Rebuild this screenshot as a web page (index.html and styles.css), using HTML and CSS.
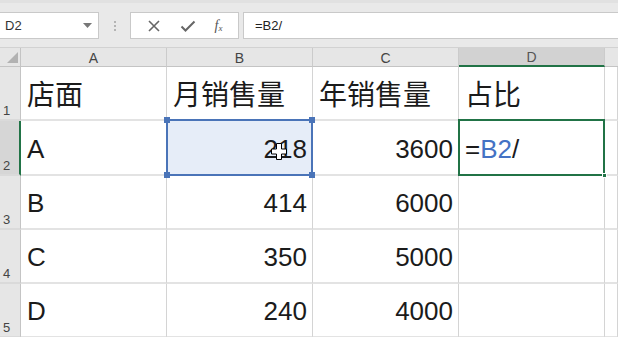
FILE: index.html
```html
<!DOCTYPE html>
<html lang="zh">
<head>
<meta charset="utf-8">
<title>Excel</title>
<link rel="stylesheet" href="styles.css">
</head>
<body>
<div class="formula-bar">
  <div class="namebox">
    <span class="name">D2</span>
    <svg class="dd" width="9" height="5" viewBox="0 0 9 5"><path d="M0 0h9L4.5 5z" fill="#777"/></svg>
  </div>
  <div class="grip"><i></i><i></i><i></i></div>
  <div class="buttons">
    <svg width="14" height="14" viewBox="0 0 14 14"><path d="M2 2L12 12M12 2L2 12" stroke="#666" stroke-width="1.6" fill="none"/></svg>
    <svg width="16" height="14" viewBox="0 0 16 14"><path d="M1.5 7.5L5.5 11.5L14.5 2.5" stroke="#666" stroke-width="2" fill="none"/></svg>
    <span class="fx">f<sub>x</sub></span>
  </div>
  <div class="formula-input">=B2/</div>
</div>
<div class="sheet">
  <div class="corner"><span class="tri"></span></div>
  <div class="colh">A</div>
  <div class="colh">B</div>
  <div class="colh">C</div>
  <div class="colh sel">D</div>
  <div class="colh last"></div>

  <div class="rowh">1</div>
  <div class="cell zh">店面</div>
  <div class="cell zh">月销售量</div>
  <div class="cell zh">年销售量</div>
  <div class="cell zh">占比</div>
  <div class="cell"></div>

  <div class="rowh sel">2</div>
  <div class="cell">A</div>
  <div class="cell num selb">2<span class="gap">1</span>8
    <span class="h tl"></span><span class="h tr"></span><span class="h bl"></span><span class="h br"></span>
    <svg class="cursor" width="16" height="17" viewBox="0 0 16 17"><path d="M5.5 0.5h5v5.5h5v5h-5v5.5h-5v-5.5h-5v-5h5z" fill="#fff" stroke="#000" stroke-width="1"/></svg>
  </div>
  <div class="cell num">3600</div>
  <div class="cell active">=<span class="ref">B2</span>/<span class="fill"></span></div>
  <div class="cell"></div>

  <div class="rowh">3</div>
  <div class="cell">B</div>
  <div class="cell num">414</div>
  <div class="cell num">6000</div>
  <div class="cell"></div>
  <div class="cell"></div>

  <div class="rowh">4</div>
  <div class="cell">C</div>
  <div class="cell num">350</div>
  <div class="cell num">5000</div>
  <div class="cell"></div>
  <div class="cell"></div>

  <div class="rowh">5</div>
  <div class="cell">D</div>
  <div class="cell num">240</div>
  <div class="cell num">4000</div>
  <div class="cell"></div>
  <div class="cell"></div>
</div>
</body>
</html>
```
FILE: styles.css
```css
* { box-sizing: border-box; }
html, body { margin: 0; padding: 0; }
body {
  width: 618px;
  height: 337px;
  overflow: hidden;
  background: #fff;
  font-family: "Liberation Sans", "Noto Sans CJK SC", sans-serif;
}
.formula-bar {
  height: 48px;
  background: #e9e9e9;
  border-top: 3px solid #e1e1e1;
  padding-top: 9px;
  display: flex;
  align-items: flex-start;
  border-bottom: 1px solid #d2d2d2;
}
.namebox {
  width: 99px;
  height: 27px;
  background: #fff;
  border: 1px solid #c9c9c9;
  border-left: none;
  display: flex;
  align-items: center;
  justify-content: space-between;
  padding: 0 6px 0 5px;
}
.name { font-size: 13px; color: #333; }
.grip {
  width: 31px;
  height: 27px;
  display: flex;
  flex-direction: column;
  align-items: center;
  justify-content: center;
  gap: 2px;
}
.grip i { display: block; width: 2px; height: 2px; background: #b4b4b4; }
.buttons {
  width: 109px;
  height: 27px;
  background: #fff;
  border: 1px solid #c9c9c9;
  display: flex;
  align-items: center;
  justify-content: space-around;
  padding: 0 6px;
}
.fx {
  font-family: "Liberation Serif", serif;
  font-style: italic;
  font-size: 14px;
  color: #555;
}
.fx sub { font-size: 9px; vertical-align: -1px; }
.formula-input {
  flex: 1;
  margin-left: 4px;
  height: 27px;
  background: #fff;
  border: 1px solid #c9c9c9;
  border-right: none;
  font-size: 13px;
  color: #222;
  display: flex;
  align-items: center;
  padding-left: 11px;
}
.sheet {
  display: grid;
  grid-template-columns: 21px 146px 146px 146px 146px 1fr;
  grid-template-rows: 19px 54px 55px 54px 54px 54px;
}
.corner {
  background: #e6e6e6;
  border-right: 1px solid #c4c4c4;
  border-bottom: 1px solid #c4c4c4;
  position: relative;
}
.tri {
  position: absolute;
  right: 2px;
  bottom: 3px;
  width: 0;
  height: 0;
  border-left: 11px solid transparent;
  border-bottom: 11px solid #b2b2b2;
}
.colh {
  background: #e6e6e6;
  border-right: 1px solid #cbcbcb;
  border-bottom: 1px solid #c4c4c4;
  font-size: 14px;
  color: #444;
  display: flex;
  align-items: center;
  justify-content: center;
  padding-top: 1px;
}
.colh.sel {
  background: #d2d2d2;
  border-bottom: 2px solid #217346;
  color: #555;
}
.colh.last { border-right: none; }
.rowh {
  background: #e6e6e6;
  border-right: 1px solid #c4c4c4;
  border-bottom: 2px solid #dadada;
  font-size: 13px;
  color: #444;
  display: flex;
  align-items: flex-end;
  padding: 0 0 1px 3px;
}
.rowh.sel {
  background: #d6d6d6;
  border-right: 2px solid #217346;
}
.cell {
  border-right: 1px solid #d4d4d4;
  border-bottom: 2px solid #e3e3e3;
  font-size: 26px;
  line-height: 1;
  color: #1b1b1b;
  display: flex;
  align-items: flex-end;
  padding: 0 5px 12px 6px;
  position: relative;
}
.cell.zh { font-size: 28px; padding-bottom: 9px; }
.cell.num { justify-content: flex-end; }
.selb {
  background: #e6edf8;
}
.selb::after {
  content: "";
  position: absolute;
  left: -1px;
  top: -2px;
  right: -1px;
  bottom: -2px;
  border: 2px solid #4a74b8;
  pointer-events: none;
}
.h {
  position: absolute;
  width: 6px;
  height: 6px;
  background: #4a74b8;
  z-index: 2;
}
.h.tl { left: -3px; top: -4px; }
.h.tr { right: -3px; top: -4px; }
.h.bl { left: -3px; bottom: -4px; }
.h.br { right: -3px; bottom: -4px; }
.cursor {
  position: absolute;
  left: 104px;
  top: 22px;
  z-index: 3;
}
.active {
  position: relative;
}
.active::after {
  content: "";
  position: absolute;
  left: -1px;
  top: -2px;
  right: -1px;
  bottom: -2px;
  border: 2px solid #217346;
}
.ref { color: #4472c4; }
.fill {
  position: absolute;
  right: -3px;
  bottom: -4px;
  width: 5px;
  height: 5px;
  background: #217346;
  border: 1px solid #fff;
  z-index: 2;
}
```
